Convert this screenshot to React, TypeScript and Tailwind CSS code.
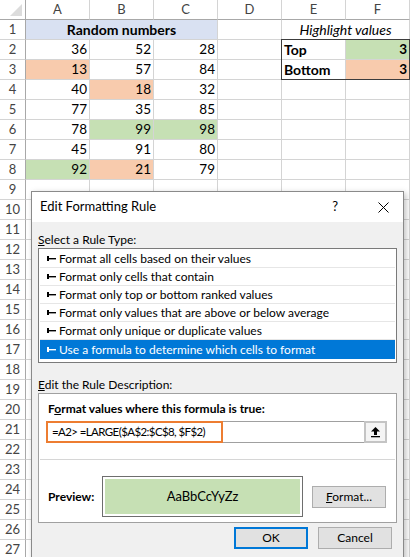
import React from 'react';

const ORANGE = 'bg-[#f8cbad]';
const GREEN = 'bg-[#c6e0b4]';

const numbers: number[][] = [
  [36, 52, 28],
  [13, 57, 84],
  [40, 18, 32],
  [77, 35, 85],
  [78, 99, 98],
  [45, 91, 80],
  [92, 21, 79],
];

// fill colours keyed by "row-col" (row is the sheet row number)
const fills: Record<string, string> = {
  '3-0': ORANGE,
  '4-1': ORANGE,
  '8-1': ORANGE,
  '6-1': GREEN,
  '6-2': GREEN,
  '8-0': GREEN,
};

const rules = [
  'Format all cells based on their values',
  'Format only cells that contain',
  'Format only top or bottom ranked values',
  'Format only values that are above or below average',
  'Format only unique or duplicate values',
  'Use a formula to determine which cells to format',
];

const cell = 'border-r border-b border-[#d4d4d4]';
const rowHead = 'border-r border-b border-[#d4d4d4] border-r-[#a8a8a8] flex items-center justify-center text-[#444] text-[13px]';

function Bullet() {
  return (
    <svg width="9" height="7" viewBox="0 0 9 7" className="shrink-0">
      <rect x="0" y="1" width="2" height="5" fill="currentColor" />
      <rect x="2" y="3" width="7" height="1.4" fill="currentColor" />
    </svg>
  );
}

function CollapseIcon() {
  return (
    <svg width="11" height="12" viewBox="0 0 11 12">
      <polygon points="5.5,1 1,5.5 10,5.5" fill="#000" />
      <rect x="4" y="5" width="3" height="4" fill="#000" />
      <rect x="1" y="10" width="9" height="1.3" fill="#000" />
    </svg>
  );
}

function CornerTriangle() {
  return (
    <svg width="26" height="20" viewBox="0 0 26 20">
      <polygon points="22,4 22,16 10,16" fill="#dcdcdc" />
    </svg>
  );
}

function SheetRow({ r }: { r: number }) {
  const label = <div className={rowHead}>{r}</div>;

  if (r === 1) {
    return (
      <>
        {label}
        <div className={`col-span-3 ${cell} bg-[#d9e1f2] flex items-center justify-center font-bold text-[14px]`}>
          Random numbers
        </div>
        <div className={cell} />
        <div className={`col-span-2 ${cell} flex items-center justify-center italic text-[14px]`}>
          Highlight values
        </div>
      </>
    );
  }

  const values = numbers[r - 2];

  return (
    <>
      {label}
      {[0, 1, 2].map((c) => (
        <div
          key={c}
          className={`${cell} ${fills[`${r}-${c}`] ?? ''} flex items-center justify-end pr-[2px]`}
        >
          {values ? values[c] : ''}
        </div>
      ))}
      <div className={cell} />
      {r === 2 && (
        <>
          <div className={`${cell} flex items-center pl-[2px] font-bold text-[14px]`}>Top</div>
          <div className={`${cell} ${GREEN} flex items-center justify-end pr-[2px] font-bold`}>3</div>
        </>
      )}
      {r === 3 && (
        <>
          <div className={`${cell} flex items-center pl-[2px] font-bold text-[14px]`}>Bottom</div>
          <div className={`${cell} ${ORANGE} flex items-center justify-end pr-[2px] font-bold`}>3</div>
        </>
      )}
      {r > 3 && (
        <>
          <div className={cell} />
          <div className={cell} />
        </>
      )}
    </>
  );
}

function Sheet() {
  const rows = Array.from({ length: 27 }, (_, i) => i + 1);

  return (
    <div className="relative grid grid-cols-[26px_repeat(6,64px)] auto-rows-[20px] font-['Lato',sans-serif] text-[13.5px] text-black">
      <div className="border-r border-b border-[#a8a8a8]">
        <CornerTriangle />
      </div>
      {['A', 'B', 'C', 'D', 'E', 'F'].map((col) => (
        <div
          key={col}
          className="border-r border-b border-[#d4d4d4] border-b-[#a8a8a8] flex items-center justify-center text-[#444] text-[13px]"
        >
          {col}
        </div>
      ))}
      {rows.map((r) => (
        <SheetRow key={r} r={r} />
      ))}

      {/* outline around E2:F3 */}
      <div className="absolute left-[281px] top-[39px] w-[129px] h-[41px] border border-[#3c3c3c] pointer-events-none" />
    </div>
  );
}

function EditRuleDialog() {
  return (
    <div className="absolute left-[31px] top-[191px] w-[373px] h-[380px] border border-[#8a8a8a] bg-[#f0f0f0] shadow-[2px_2px_6px_rgba(0,0,0,0.25)] font-['Lato',sans-serif] text-[12px] text-black">
      {/* title bar */}
      <div className="h-[30px] bg-white flex items-center pl-[8px] pr-[14px]">
        <span className="text-[13px]">Edit Formatting Rule</span>
        <span className="ml-auto text-[13px] mr-[40px]">?</span>
        <svg width="11" height="11" viewBox="0 0 11 11">
          <path d="M0.5 0.5 L10.5 10.5 M10.5 0.5 L0.5 10.5" stroke="#000" strokeWidth="1" />
        </svg>
      </div>

      <div className="px-[6px]">
        <div className="mt-[9px] h-[17px] flex items-center">
          <span>
            <span className="underline">S</span>elect a Rule Type:
          </span>
        </div>

        <div className="w-[359px] h-[115px] border border-[#7a7a7a] bg-white p-[1px]">
          {rules.map((rule, i) => {
            const selected = i === rules.length - 1;
            return (
              <div
                key={rule}
                className={
                  selected
                    ? 'h-[19px] flex items-center gap-[3px] pl-[7px] bg-[#0078d7] text-white'
                    : 'h-[18px] flex items-center gap-[3px] pl-[7px] border-b border-[#e6e6e6]'
                }
              >
                <Bullet />
                <span>{rule}</span>
              </div>
            );
          })}
        </div>

        <div className="mt-[13px] h-[17px] flex items-center">
          <span>
            <span className="underline">E</span>dit the Rule Description:
          </span>
        </div>

        <div className="w-[359px] h-[130px] border border-[#a0a0a0] bg-white">
          <div className="mt-[7px] h-[16px] pl-[9px] flex items-center font-bold">
            <span>
              F<span className="underline">o</span>rmat values where this formula is true:
            </span>
          </div>

          <div className="mt-[4px] ml-[7px] w-[341px] h-[22px] flex">
            <div className="w-[177px] border-2 border-[#ed7d31] flex items-center pl-[4px] whitespace-nowrap text-[11.5px] tracking-[-0.6px]">
              =A2&gt; =LARGE($A$2:$C$8, $F$2)
            </div>
            <div className="flex-1 border-y border-[#a0a0a0]" />
            <div className="w-[23px] border-2 border-[#c4c4c4] bg-[#f4f4f4] flex items-center justify-center">
              <CollapseIcon />
            </div>
          </div>

          <div className="mt-[16px] mx-[1px] h-px bg-[#d6d6d6]" />

          <div className="mt-[16px] flex items-center">
            <span className="ml-[9px] w-[54px] font-bold">Preview:</span>
            <div className="w-[201px] h-[41px] border border-[#6e6e6e] p-[2px]">
              <div className="h-full bg-[#c6e0b4] flex items-center justify-center text-[13px]">
                AaBbCcYyZz
              </div>
            </div>
            <button className="ml-[9px] w-[74px] h-[22px] border border-[#adadad] bg-[#e1e1e1] flex items-center justify-center">
              <span>
                <span className="underline">F</span>ormat...
              </span>
            </button>
          </div>
        </div>

        <div className="mt-[4px] flex justify-end gap-[10px] pr-[5px]">
          <button className="w-[74px] h-[22px] border-2 border-[#0078d7] bg-[#e1e1e1] flex items-center justify-center">
            OK
          </button>
          <button className="w-[74px] h-[22px] border border-[#adadad] bg-[#e1e1e1] flex items-center justify-center">
            Cancel
          </button>
        </div>
      </div>
    </div>
  );
}

export default function App() {
  return (
    <div className="relative w-[410px] h-[557px] overflow-hidden bg-white">
      <Sheet />
      <EditRuleDialog />
    </div>
  );
}
